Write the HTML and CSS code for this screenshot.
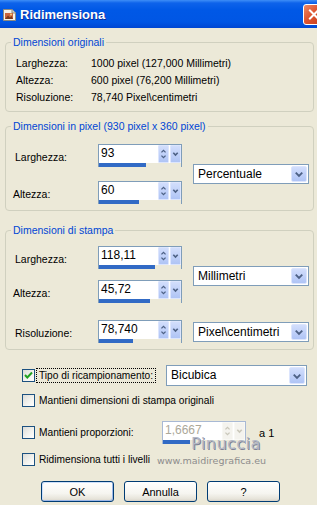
FILE: index.html
```html
<!DOCTYPE html>
<html>
<head>
<meta charset="utf-8">
<title>Ridimensiona</title>
<link rel="stylesheet" href="styles.css">
</head>
<body>
<div class="titlebar">
  <svg class="appicon" viewBox="0 0 15 15" width="15" height="15">
    <path d="M1.5 2.5 H10 L13.5 6 V13.5 H1.5 Z" fill="#F4F1EA" stroke="#8C8A80" stroke-width="1"/>
    <path d="M10 2.5 V6 H13.5" fill="#D8D4C8" stroke="#8C8A80" stroke-width="1"/>
    <rect x="3" y="6" width="8" height="6" fill="#C9653E"/>
    <path d="M3 12 L6 8.5 L8 10.5 L9.5 9 L11 12 Z" fill="#7A3A1E"/>
    <circle cx="9" cy="7.6" r="1" fill="#F6D27A"/>
  </svg>
  <span class="title">Ridimensiona</span>
  <div class="close">
    <svg viewBox="0 0 21 21" width="21" height="21"><path d="M6 6 L15 15 M15 6 L6 15" stroke="#fff" stroke-width="2.2" stroke-linecap="square"/></svg>
  </div>
</div>

<fieldset class="grp g1">
  <legend>Dimensioni originali</legend>
  <div class="info">
    <span>Larghezza:</span><span>1000 pixel (127,000 Millimetri)</span>
    <span>Altezza:</span><span>600 pixel (76,200 Millimetri)</span>
    <span>Risoluzione:</span><span>78,740 Pixel\centimetri</span>
  </div>
</fieldset>

<fieldset class="grp g2">
  <legend>Dimensioni in pixel (930 pixel x 360 pixel)</legend>
  <div class="pxgrid">
    <span class="lbl ra">Larghezza:</span>
    <div class="spin ra">
      <div class="spin-top"><span class="spin-val">93</span><span class="sbtn ud"><svg viewBox="0 0 11 18"><path d="M3 7 L5.5 4.5 L8 7 M3 11 L5.5 13.5 L8 11" fill="none" stroke="#4D6185" stroke-width="1.6"/></svg></span><span class="sbtn dd"><svg viewBox="0 0 11 18"><path d="M2.8 7.5 L5.5 10.2 L8.2 7.5" fill="none" stroke="#4D6185" stroke-width="2"/></svg></span></div>
      <div class="spin-track"><div class="spin-fill" style="width:57%"></div></div>
    </div>
    <span class="lbl rb lbl-alt">Altezza:</span>
    <div class="spin rb">
      <div class="spin-top"><span class="spin-val">60</span><span class="sbtn ud"><svg viewBox="0 0 11 18"><path d="M3 7 L5.5 4.5 L8 7 M3 11 L5.5 13.5 L8 11" fill="none" stroke="#4D6185" stroke-width="1.6"/></svg></span><span class="sbtn dd"><svg viewBox="0 0 11 18"><path d="M2.8 7.5 L5.5 10.2 L8.2 7.5" fill="none" stroke="#4D6185" stroke-width="2"/></svg></span></div>
      <div class="spin-track"><div class="spin-fill" style="width:49%"></div></div>
    </div>
    <div class="combo sel2">
      <span class="combo-text">Percentuale</span>
      <span class="combo-btn"><svg viewBox="0 0 15 16"><path d="M4 6.5 L7.5 10 L11 6.5" fill="none" stroke="#4D6185" stroke-width="2"/></svg></span>
    </div>
  </div>
</fieldset>

<fieldset class="grp g3">
  <legend>Dimensioni di stampa</legend>
  <div class="prgrid">
    <span class="lbl r1">Larghezza:</span>
    <div class="spin r1">
      <div class="spin-top"><span class="spin-val">118,11</span><span class="sbtn ud"><svg viewBox="0 0 11 18"><path d="M3 7 L5.5 4.5 L8 7 M3 11 L5.5 13.5 L8 11" fill="none" stroke="#4D6185" stroke-width="1.6"/></svg></span><span class="sbtn dd"><svg viewBox="0 0 11 18"><path d="M2.8 7.5 L5.5 10.2 L8.2 7.5" fill="none" stroke="#4D6185" stroke-width="2"/></svg></span></div>
      <div class="spin-track"><div class="spin-fill" style="width:68%"></div></div>
    </div>
    <span class="lbl r2 lbl-alt">Altezza:</span>
    <div class="spin r2">
      <div class="spin-top"><span class="spin-val">45,72</span><span class="sbtn ud"><svg viewBox="0 0 11 18"><path d="M3 7 L5.5 4.5 L8 7 M3 11 L5.5 13.5 L8 11" fill="none" stroke="#4D6185" stroke-width="1.6"/></svg></span><span class="sbtn dd"><svg viewBox="0 0 11 18"><path d="M2.8 7.5 L5.5 10.2 L8.2 7.5" fill="none" stroke="#4D6185" stroke-width="2"/></svg></span></div>
      <div class="spin-track"><div class="spin-fill" style="width:62%"></div></div>
    </div>
    <span class="lbl r3">Risoluzione:</span>
    <div class="spin r3">
      <div class="spin-top"><span class="spin-val">78,740</span><span class="sbtn ud"><svg viewBox="0 0 11 18"><path d="M3 7 L5.5 4.5 L8 7 M3 11 L5.5 13.5 L8 11" fill="none" stroke="#4D6185" stroke-width="1.6"/></svg></span><span class="sbtn dd"><svg viewBox="0 0 11 18"><path d="M2.8 7.5 L5.5 10.2 L8.2 7.5" fill="none" stroke="#4D6185" stroke-width="2"/></svg></span></div>
      <div class="spin-track"><div class="spin-fill" style="width:41%"></div></div>
    </div>
    <div class="combo selmm">
      <span class="combo-text">Millimetri</span>
      <span class="combo-btn"><svg viewBox="0 0 15 16"><path d="M4 6.5 L7.5 10 L11 6.5" fill="none" stroke="#4D6185" stroke-width="2"/></svg></span>
    </div>
    <div class="combo selres">
      <span class="combo-text">Pixel\centimetri</span>
      <span class="combo-btn"><svg viewBox="0 0 15 16"><path d="M4 6.5 L7.5 10 L11 6.5" fill="none" stroke="#4D6185" stroke-width="2"/></svg></span>
    </div>
  </div>
</fieldset>

<div class="opts">
  <div class="orow o1">
    <span class="cb checked"><svg viewBox="0 0 11 11"><path d="M2 5 L4.3 7.5 L9 2.5" fill="none" stroke="#21A121" stroke-width="2"/></svg></span>
    <span class="cblabel focus">Tipo di ricampionamento:</span>
    <div class="combo bic">
      <span class="combo-text">Bicubica</span>
      <span class="combo-btn"><svg viewBox="0 0 15 16"><path d="M4 6.5 L7.5 10 L11 6.5" fill="none" stroke="#4D6185" stroke-width="2"/></svg></span>
    </div>
  </div>
  <div class="orow o2">
    <span class="cb"></span>
    <span class="cblabel">Mantieni dimensioni di stampa originali</span>
  </div>
  <div class="orow o3">
    <span class="cb"></span>
    <span class="cblabel wide">Mantieni proporzioni:</span>
    <div class="spin disabled">
      <div class="spin-top"><span class="spin-val">1,6667</span><span class="sbtn ud"><svg viewBox="0 0 11 18"><path d="M3 7 L5.5 4.5 L8 7 M3 11 L5.5 13.5 L8 11" fill="none" stroke="#C9C7BA" stroke-width="1.6"/></svg></span><span class="sbtn dd"><svg viewBox="0 0 11 18"><path d="M2.8 7.5 L5.5 10.2 L8.2 7.5" fill="none" stroke="#C9C7BA" stroke-width="2"/></svg></span></div>
      <div class="spin-track"><div class="spin-fill" style="width:33%"></div></div>
    </div>
    <span class="ratio">a 1</span>
  </div>
  <div class="orow o4">
    <span class="cb"></span>
    <span class="cblabel">Ridimensiona tutti i livelli</span>
  </div>
  <div class="buttons">
    <span class="btn default">OK</span>
    <span class="btn">Annulla</span>
    <span class="btn">?</span>
  </div>
  <span class="wm wm-name">Pinuccia</span>
  <span class="wm wm-url">www.maidiregrafica.eu</span>
</div>
</body>
</html>
```

FILE: styles.css
```css
* { box-sizing: border-box; }
html, body { margin: 0; padding: 0; }
body {
  width: 317px;
  height: 505px;
  overflow: hidden;
  background: #ECE9D8;
  font-family: "Liberation Sans", Arial, sans-serif;
  font-size: 10.5px;
  color: #000;
  position: relative;
}

/* title bar */
.titlebar {
  height: 28px;
  display: flex;
  align-items: center;
  overflow: hidden;
  background: linear-gradient(to bottom, #3E8EF7 0px, #0E63EA 3px, #0058E6 10px, #0056E4 22px, #0047D2 28px);
}
.appicon { flex: none; margin-left: 2px; display: block; }
.title {
  margin-left: 3px;
  color: #fff;
  font-weight: bold;
  font-size: 13px;
  text-shadow: 1px 1px 0 #0B2F9A;
}
.close {
  flex: none;
  margin-left: auto;
  margin-right: -8px;
  width: 22px;
  height: 21px;
  border: 1px solid #fff;
  border-radius: 3px;
  background: linear-gradient(135deg, #EE8A66 0%, #DD5430 45%, #C63C18 100%);
  display: flex;
  align-items: center;
  justify-content: center;
}
.close svg { display: block; width: 20px; height: 19px; }

/* group boxes */
fieldset.grp {
  margin: 0 3px 0 5px;
  padding: 0;
  border: 1px solid #D0D0BF;
  border-radius: 4px;
  min-width: 0;
}
fieldset.grp legend {
  margin-left: 5px;
  padding: 0 2px;
  color: #0046D5;
  line-height: 13px;
  font-size: 10.5px;
}
.g1 { margin-top: 8px !important; }
.g2 { margin-top: 8px !important; }
.g3 { margin-top: 13px !important; }

.info {
  display: grid;
  grid-template-columns: 75px auto;
  grid-auto-rows: 17px;
  align-items: center;
  padding: 5px 0 6px 10px;
}

.pxgrid {
  display: grid;
  grid-template-columns: 72px 84px 116px;
  grid-template-rows: 23px 14px 23px;
  column-gap: 11px;
  padding: 11px 0 6px 9px;
}
.pxgrid .ra { grid-row: 1; }
.pxgrid .rb { grid-row: 3; }
.lbl { align-self: center; grid-column: 1; padding-top: 2px; white-space: nowrap; }
.lbl-alt { margin-left: -2px; }
.spin.ra, .spin.rb, .spin.r1, .spin.r2, .spin.r3 { grid-column: 2; }
.sel2 { grid-column: 3; grid-row: 1 / 4; align-self: center; }

.prgrid {
  display: grid;
  grid-template-columns: 72px 84px 116px;
  grid-template-rows: 23px 11px 23px 17px 23px;
  column-gap: 11px;
  padding: 9px 0 6px 9px;
}
.prgrid .r1 { grid-row: 1; }
.prgrid .r2 { grid-row: 3; }
.prgrid .r3 { grid-row: 5; }
.selmm { grid-column: 3; grid-row: 1 / 4; align-self: center; margin-top: 3px; }
.selres { grid-column: 3; grid-row: 5; align-self: center; }

/* spin control */
.spin {
  width: 84px;
  height: 23px;
  border: 1px solid #7F9DB9;
  background: #fff;
  display: flex;
  flex-direction: column;
}
.spin-top {
  flex: 1;
  display: flex;
  align-items: stretch;
}
.spin-val {
  flex: 1;
  padding-left: 2px;
  font-size: 12px;
  line-height: 17px;
}
.sbtn {
  width: 11px;
  margin: 0 0 0 1px;
  background: linear-gradient(to bottom, #D2DEFC, #AFC4F5);
  border: 1px solid #DCE5FD;
  border-radius: 1px;
  display: flex;
  align-items: center;
  justify-content: center;
}
.sbtn svg { display: block; width: 11px; height: 16px; }
.spin-track {
  height: 4px;
  background: #ECE9D8;
}
.spin-fill {
  height: 4px;
  background: #316AC5;
}
.spin.disabled { border-color: #A8B9D4; }
.spin.disabled .spin-val { color: #ACA899; }
.spin.disabled .sbtn { background: #F4F3EE; border-color: #F8F8F4; }

/* combo box */
.combo {
  height: 20px;
  border: 1px solid #7F9DB9;
  background: #fff;
  display: flex;
  align-items: stretch;
}
.combo-text {
  flex: 1;
  padding-left: 4px;
  font-size: 12px;
  line-height: 18px;
}
.combo-btn {
  width: 16px;
  margin: 1px;
  background: linear-gradient(to bottom, #D2DEFC, #AFC4F5);
  border: 1px solid #DCE5FD;
  border-radius: 2px;
  display: flex;
  align-items: center;
  justify-content: center;
}
.combo-btn svg { display: block; width: 15px; height: 16px; }

/* options */
.opts { padding-left: 22px; }
.orow { display: flex; align-items: center; }
.o1 { height: 21px; margin-top: 15px; }
.o2 { height: 13px; margin-top: 8px; }
.o3 { height: 23px; margin-top: 14px; }
.o4 { height: 13px; margin-top: 9px; }
.cb {
  flex: none;
  width: 13px;
  height: 13px;
  border: 1px solid #1C5180;
  background: linear-gradient(135deg, #DCDCD7 0%, #F4F4F0 60%, #FFFFFF 100%);
  display: flex;
  align-items: center;
  justify-content: center;
}
.cb svg { display: block; width: 11px; height: 11px; }
.cblabel { margin-left: 4px; font-size: 10.2px; white-space: nowrap; }
.cblabel.focus { outline: 1px dotted #000; outline-offset: 1px; padding: 0 1px; margin-left: 3px; }
.cblabel.wide { width: 123px; }
.bic { width: 141px; height: 21px; margin-left: 12px; }
.ratio { margin-left: 13px; font-size: 11px; }

/* buttons */
.buttons {
  display: flex;
  gap: 10px;
  margin-top: 15px;
  padding-left: 19px;
}
.btn {
  width: 73px;
  height: 21px;
  border: 1px solid #003C74;
  border-radius: 3px;
  background: linear-gradient(to bottom, #FFFFFF 0%, #F6F5F0 60%, #E6E3D9 90%, #D6D0C5 100%);
  display: flex;
  align-items: center;
  justify-content: center;
  font-size: 11px;
}
.btn.default { box-shadow: inset -1px -1px 0 #9DB8E8, inset 1px 1px 0 #CEE0FA; }

/* watermark overlay */
.wm { position: absolute; white-space: nowrap; pointer-events: none; }
.wm-name {
  left: 191px;
  top: 436px;
  font-family: "DejaVu Sans", sans-serif;
  font-size: 16px;
  line-height: 16px;
  letter-spacing: 0.5px;
  color: #B3B8C6;
  text-shadow: 1px 1px 0 #7D8294;
}
.wm-url {
  left: 157px;
  top: 455px;
  font-family: "DejaVu Sans", sans-serif;
  font-size: 9.5px;
  color: #8C8C8C;
}
```
